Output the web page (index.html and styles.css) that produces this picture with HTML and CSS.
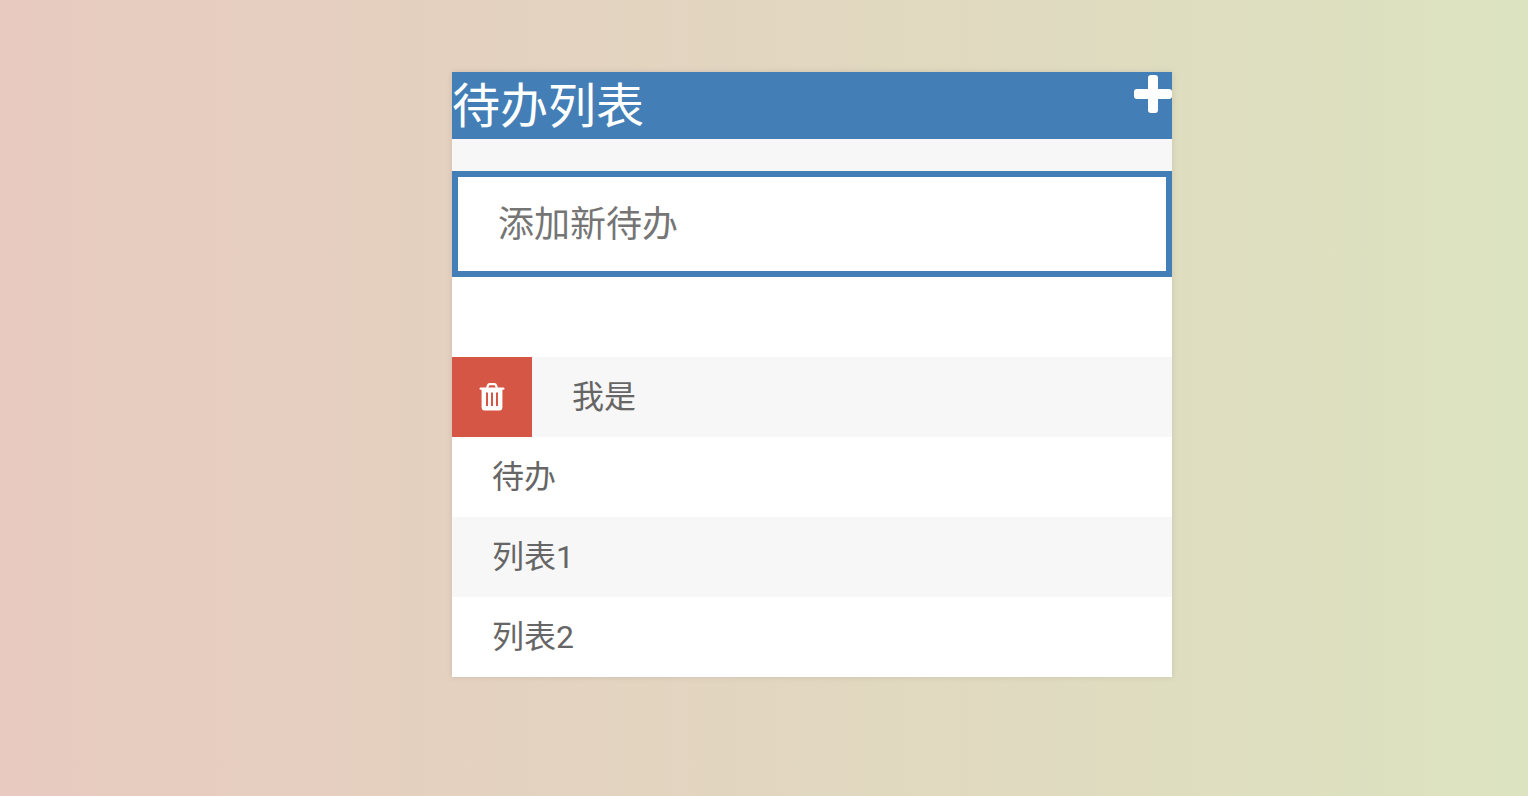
FILE: index.html
```html
<!DOCTYPE html>
<html lang="zh-CN">
<head>
    <meta charset="UTF-8">
    <meta name="viewport" content="width=device-width, initial-scale=1.0">
    <title>待办列表</title>
    <link rel="stylesheet" href="styles.css">
</head>
<body>
    <div class="container">
        <div class="header">
            <h1>待办列表</h1>
            <button type="button" class="toggle-btn" aria-label="显示或隐藏输入框">
                <svg class="icon-plus" viewBox="0 0 38 38" fill="currentColor" aria-hidden="true">
                    <rect x="14" y="0" width="10" height="38" rx="3"/>
                    <rect x="0" y="14" width="38" height="10" rx="3"/>
                </svg>
            </button>
        </div>

        <input type="text" class="new-todo" placeholder="添加新待办" aria-label="添加新待办">

        <ul class="todo-list">
            <li></li>
            <li class="active">
                <button type="button" class="delete-btn" aria-label="删除">
                    <svg class="icon-trash" viewBox="0 0 26 28" aria-hidden="true">
                        <path d="M8 5 9 2.4Q9.4 1.2 10.6 1.2H15.4Q16.6 1.2 17 2.4L18 5" fill="none" stroke="currentColor" stroke-width="2.2"/>
                        <rect x="0.5" y="4.4" width="25" height="2.4" rx="1" fill="currentColor"/>
                        <path fill="currentColor" fill-rule="evenodd" d="M2.6 6H23.4V24Q23.4 27.6 20.5 27.6H5.5Q2.6 27.6 2.6 24ZM7 9.5V23H9V9.5ZM12 9.5V23H14V9.5ZM17 9.5V23H19V9.5Z"/>
                    </svg>
                </button>
                <span>我是</span>
            </li>
            <li><span>待办</span></li>
            <li><span>列表1</span></li>
            <li><span>列表2</span></li>
        </ul>
    </div>

    <script>
        // 显示/隐藏输入框
        document.querySelector('.toggle-btn').addEventListener('click', function() {
            document.querySelector('.new-todo').classList.toggle('hidden');
        });

        // 删除待办
        document.querySelector('.delete-btn').addEventListener('click', function() {
            this.parentElement.remove();
        });
    </script>
</body>
</html>
```
FILE: styles.css
```css
* {
    box-sizing: border-box;
}

body {
    margin: 0;
    padding: 72px 0 72px 96px;
    min-height: 100vh;
    font-family: Roboto, "Noto Sans CJK SC", sans-serif;
    background: linear-gradient(90deg, #e8cac0, #e2d6c0 50%, #dce3c0);
}

.container {
    max-width: 720px;
    margin: 0 auto;
    background: #f7f7f7;
    box-shadow: 0 0 6px rgba(0, 0, 0, 0.1);
}

.header {
    display: flex;
    justify-content: space-between;
    align-items: flex-start;
    margin-bottom: 32px;
    background: #437fb6;
    color: #fff;
}

h1 {
    margin: 0;
    padding-top: 2px;
    font-size: 48px;
    font-weight: 400;
    line-height: 65px;
}

button {
    padding: 0;
    border: none;
    background: none;
    color: #fff;
    cursor: pointer;
}

.toggle-btn {
    padding-top: 3px;
}

.icon-plus {
    display: block;
    width: 38px;
    height: 38px;
}

.new-todo {
    display: block;
    width: 100%;
    height: 106px;
    padding: 2px 40px 0;
    border: 6px solid #437fb6;
    border-radius: 0;
    background: #fff;
    color: #666;
    font-family: inherit;
    font-size: 36px;
    outline: none;
}

.new-todo::placeholder {
    color: #757575;
}

.hidden {
    display: none;
}

.todo-list {
    margin: 0;
    padding: 0;
    list-style: none;
}

.todo-list li {
    display: flex;
    height: 80px;
    background: #fff;
    color: #666;
    font-size: 32px;
    line-height: 80px;
}

.todo-list li:nth-child(2n) {
    background: #f7f7f7;
}

.todo-list span {
    padding-left: 40px;
}

.delete-btn {
    display: flex;
    justify-content: center;
    align-items: center;
    width: 80px;
    background: #d65645;
}

.icon-trash {
    width: 26px;
    height: 28px;
}
```
